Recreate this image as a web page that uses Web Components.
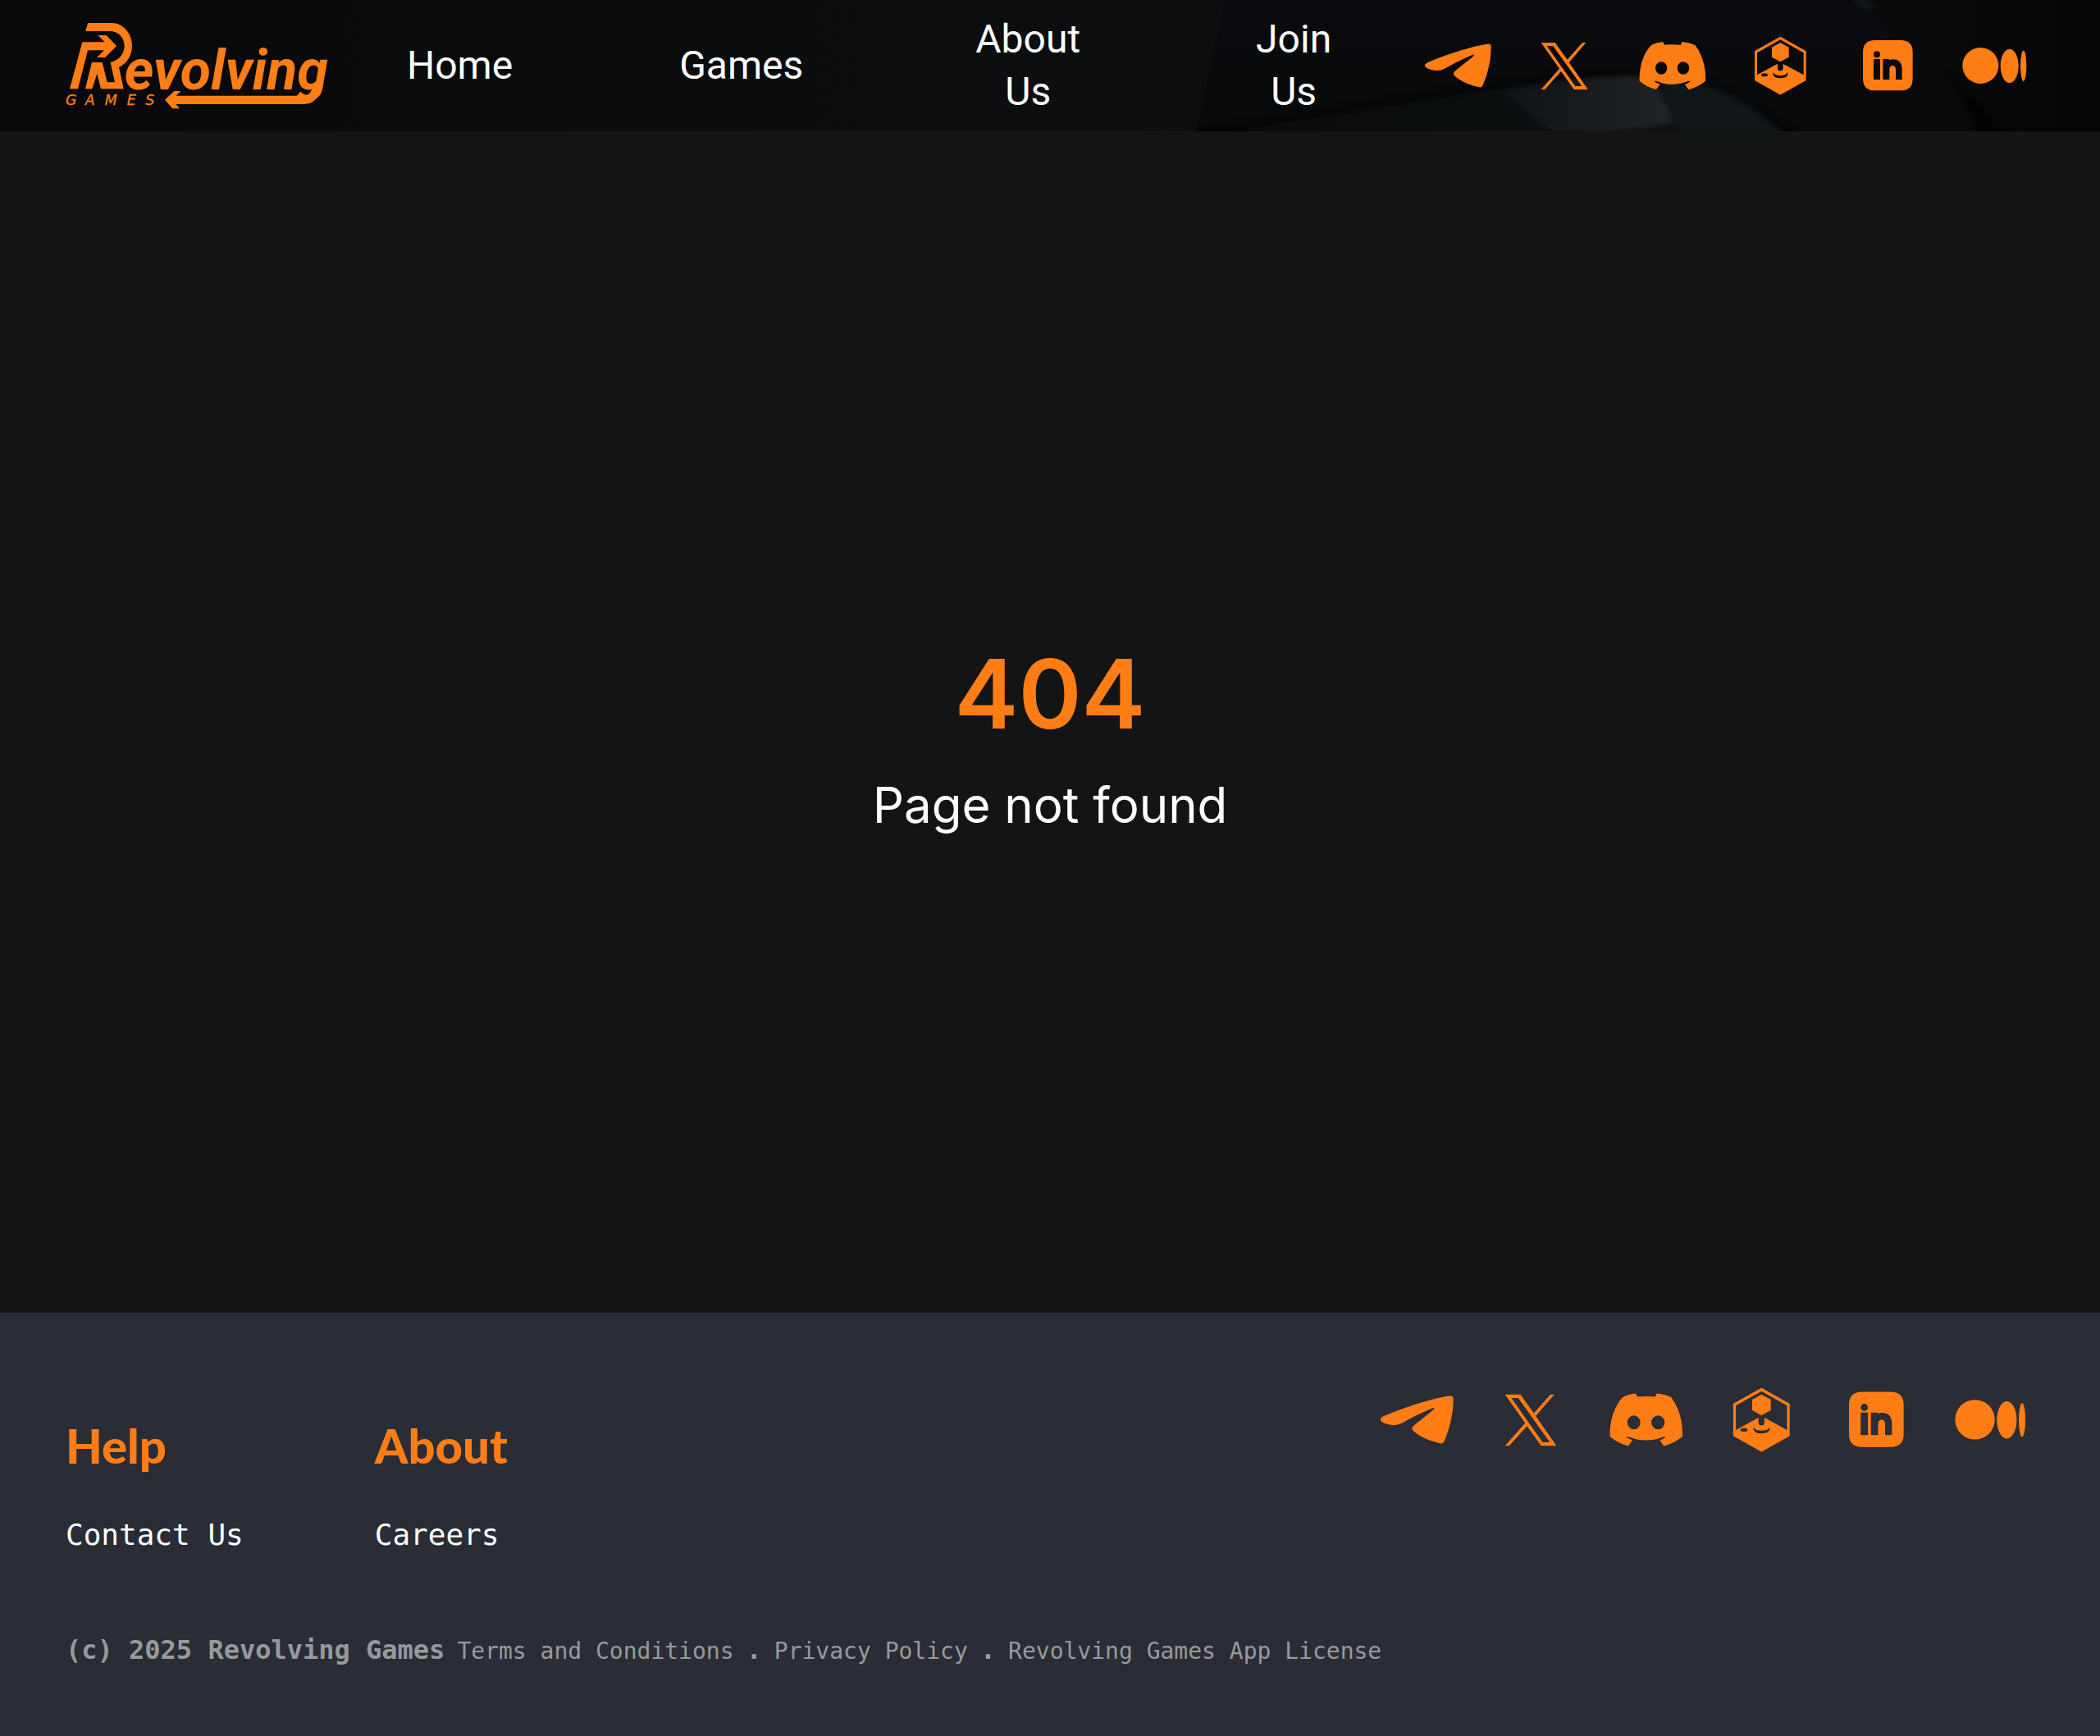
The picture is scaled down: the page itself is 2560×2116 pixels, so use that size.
<!DOCTYPE html>
<html lang="en">
<head>
<meta charset="utf-8">
<meta name="viewport" content="width=device-width, initial-scale=1">
<title>Revolving Games</title>
<style>
  :root { --accent: #ff7d14; --page: #131416; --panel: #2a2d35; --muted: #98999c; }
  body { margin: 0; background: var(--page); color: #fff; font-family: Inter, sans-serif; }
</style>
</head>
<body>
<site-page>
  <site-header slot="header"></site-header>
  <error-message code="404">Page not found</error-message>
  <site-footer slot="footer">
    <footer-column heading="Help"><a href="#contact">Contact Us</a></footer-column>
    <footer-column heading="About"><a href="#careers">Careers</a></footer-column>
  </site-footer>
</site-page>

<script>
const define = (name, html, setup) => {
  const template = document.createElement('template');
  template.innerHTML = html;
  customElements.define(name, class extends HTMLElement {
    constructor() {
      super();
      this.attachShadow({ mode: 'open' }).append(template.content.cloneNode(true));
    }
    connectedCallback() { if (setup) setup(this, this.shadowRoot); }
  });
};

define('brand-logo', `
  <style>
    :host { display: block; flex: none; }
    a { display: block; color: var(--accent); }
    svg { display: block; width: 321px; height: 104px; fill: currentColor; overflow: visible; }
    .word { font: italic 700 204px "Roboto", sans-serif; }
    .sub { font: italic 400 52px "DejaVu Sans", sans-serif; stroke: currentColor; stroke-width: 1; }
  </style>
  <a href="#home" aria-label="Revolving Games">
    <svg viewBox="60 53 963 312">
      <path d="M121 123H203L178 98H209L246 137L205 179H174L201 153H141L105 294H75Z"/>
      <path d="M141 53H228C272 53 303 92 303 137C303 172 283 202 255 215L272 294H189L175 238L157 294H132L156 197H194L212 270H240L224 197C255 190 275 166 275 137C275 106 252 83 220 83H133Z"/>
      <path d="M464 319H930C948 319 958 308 963 288H993C985 330 965 350 930 350H463L477 366H451L423 334L457 302H482Z"/>
      <text class="word" x="275" y="295">evolving</text>
      <text class="sub" x="60 131 203 284 352" y="353">GAMES</text>
    </svg>
  </a>`);

define('social-links', `
  <style>
    :host { display: flex; gap: var(--icon-gap, 50px); flex: none; }
    a { display: block; color: var(--accent); }
    svg { display: block; width: var(--icon-width, 81px); height: var(--icon-height, 71px); fill: currentColor; fill-rule: evenodd; }
  </style>
  <a href="#telegram" aria-label="Telegram"><svg viewBox="111 132 243 213"><path d="M111 237C110 232 116 228 122 225C190 196 290 164 340 158C350 157 354 162 353 170C353 215 342 265 323 308C320 316 315 318 306 315C275 308 245 295 225 279C214 270 213 264 222 256L288 203C293 198 290 196 283 199C250 212 215 230 185 247C170 255 160 256 145 254C125 250 112 246 111 237Z"/></svg></a>
  <a href="#x" aria-label="X"><svg viewBox="504 132 243 213"><path d="M536 153H587L632 215L687 153H700L638 225L707 324H656L609 258L550 324H536L603 248ZM557 165L661 312H685L580 165Z"/></svg></a>
  <a href="#discord" aria-label="Discord"><svg viewBox="896 132 243 213" overflow="visible"><path d="M978 150C964 152 949 156 937 163C910 192 893 240 895 293C912 308 932 318 955 324Q957 324 958 322L970 305C962 302 955 300 949 294C953 293 957 294 961 295C995 309 1035 309 1069 295C1073 294 1077 293 1081 294C1076 300 1068 303 1061 306L1072 322Q1074 325 1077 324C1098 318 1118 308 1136 293C1139 240 1122 195 1099 163C1086 156 1068 152 1053 150Q1051 150 1050 151L1045 161C1026 159 1006 159 986 161L981 151Q980 150 978 150ZM953 246a21.5 23.5 0 1 0 43 0a21.5 23.5 0 1 0 -43 0ZM1033 246a22 23.5 0 1 0 44 0a22 23.5 0 1 0 -44 0Z"/></svg></a>
  <a href="#gamehub" aria-label="Game hub"><svg viewBox="61 132 243 213"><path d="M180 132H184L276 184V291L184 343H180L88 291V184ZM182 142L97 190V271L172 230V246Q172 256 182 256Q192 256 192 246V230L267 271V190ZM182 153L213 170V206L182 223L151 206V170ZM157 261C152 268 157 283 182 283C208 283 213 268 208 261C208 268 200 273 182 273C165 273 157 268 157 261ZM112 271a12 6 0 1 0 24 0a12 6 0 1 0 -24 0Z"/></svg></a>
  <a href="#linkedin" aria-label="LinkedIn"><svg viewBox="453 132 243 213"><path d="M527 144H621Q665 144 665 188V284Q665 328 621 328H527Q483 328 483 284V188Q483 144 527 144ZM522 196a12 12 0 1 0 24 0a12 12 0 1 0 -24 0ZM522 213H546V288H522ZM556 213H579V217C595 210 626 212 626 250V288H603V250C603 233 580 233 580 250V288H556Z"/></svg></a>
  <a href="#medium" aria-label="Medium"><svg viewBox="845 132 243 213"><circle cx="912" cy="237" r="66"/><ellipse cx="1018" cy="238" rx="33" ry="62"/><ellipse cx="1069" cy="238" rx="11" ry="56"/></svg></a>`);

define('site-header', `
  <style>
    :host { display: block; position: relative; background: #090a0c; overflow: hidden; }
    .backdrop { position: absolute; inset: 0; width: 100%; height: 100%; }
    .bar { position: relative; display: flex; align-items: center; min-height: 160px; padding: 0 87px 0 80px; box-sizing: border-box; }
    nav { display: flex; align-items: center; margin-right: auto; }
    nav a { padding: 0 108px 0 95px; color: #fff; text-decoration: none; text-align: center; font: 400 48px/64px Roboto, sans-serif; }
    nav a.stacked { padding: 0 112px 0 102px; }
  </style>
  <svg class="backdrop" viewBox="0 0 2560 160" preserveAspectRatio="none" aria-hidden="true">
    <defs>
      <linearGradient id="base"><stop offset="0" stop-color="#08090b"/><stop offset=".56" stop-color="#0d0e10"/><stop offset=".6" stop-color="#0d0e10"/></linearGradient>
      <linearGradient id="panel" x2="0" y2="1"><stop offset="0" stop-color="#0b0c10"/><stop offset="1" stop-color="#070809"/></linearGradient>
      <linearGradient id="hull" gradientUnits="userSpaceOnUse" x1="1480" y1="0" x2="2040" y2="0"><stop offset="0" stop-color="#0a0b0c"/><stop offset=".62" stop-color="#0c0f10"/><stop offset="1" stop-color="#0f1214"/></linearGradient>
      <linearGradient id="shine" gradientUnits="userSpaceOnUse" x1="1840" y1="0" x2="2040" y2="0"><stop offset="0" stop-color="#101416"/><stop offset=".8" stop-color="#1d2124"/><stop offset="1" stop-color="#212528"/></linearGradient>
      <linearGradient id="night" gradientUnits="userSpaceOnUse" x1="2280" y1="0" x2="2540" y2="0"><stop offset="0" stop-color="#090a0b"/><stop offset="1" stop-color="#050505"/></linearGradient>
      <filter id="soft" color-interpolation-filters="sRGB"><feGaussianBlur stdDeviation="3"/></filter>
    </defs>
    <rect width="2560" height="160" fill="url(#base)"/>
    <path d="M1493 0H2560V160H1458Z" fill="url(#panel)"/>
    <path d="M2262 0Q2360 70 2415 160H2560V0Z" fill="url(#night)"/>
    <g filter="url(#soft)">
      <path d="M1458 164Q1700 122 1850 101T2060 94Q2130 120 2184 164Z" fill="url(#hull)" stroke="#040405" stroke-width="7"/>
      <path d="M1835 112Q1920 92 2000 92Q2022 102 2040 149L1960 164H1895Z" fill="url(#shine)"/>
      <path d="M2022 93Q2115 100 2174 164H2050Z" fill="#111618"/>
      <path d="M2262 -2L2282 10" stroke="#15191c" stroke-width="8"/>
      <path d="M2375 90Q2395 120 2412 166H2450Q2400 110 2375 90Z" fill="#030304"/>
    </g>
  </svg>
  <div class="bar">
    <brand-logo></brand-logo>
    <nav aria-label="Main">
      <a href="#home">Home</a>
      <a href="#games">Games</a>
      <a class="stacked" href="#about">About<br>Us</a>
      <a class="stacked" href="#join">Join<br>Us</a>
    </nav>
    <social-links></social-links>
  </div>`);

define('error-message', `
  <style>
    :host { display: flex; flex-direction: column; align-items: center; justify-content: center; gap: 29px; padding-top: 32px; text-align: center; }
    h1 { margin: 0; color: var(--accent); font: 600 117px/140px Inter, sans-serif; }
    p { margin: 0; font: 400 60px/72px Inter, sans-serif; }
  </style>
  <h1></h1>
  <p><slot></slot></p>`, (host, root) => {
  root.querySelector('h1').textContent = host.getAttribute('code');
});

define('footer-column', `
  <style>
    :host { display: flex; flex-direction: column; gap: 52px; }
    h2 { margin: 0; color: var(--accent); font: 900 58px/70px Lato, sans-serif; }
    ::slotted(a) { color: #fff; text-decoration: none; font: 400 36px/44px "DejaVu Sans Mono", monospace; }
  </style>
  <h2></h2>
  <slot></slot>`, (host, root) => {
  root.querySelector('h2').textContent = host.getAttribute('heading');
});

define('site-footer', `
  <style>
    :host { display: flex; flex-direction: column; gap: 98px; padding: 92px 88px 83px 80px; background: var(--panel); }
    .top { display: flex; justify-content: space-between; align-items: flex-start; }
    .columns { display: flex; gap: 160px; padding-top: 35px; }
    social-links { --icon-width: 89px; --icon-height: 78px; --icon-gap: 51px; }
    .legal { display: flex; flex-wrap: wrap; align-items: baseline; gap: 15px; color: var(--muted); font: 700 32px/40px "DejaVu Sans Mono", monospace; }
    .legal a { color: inherit; text-decoration: none; font-size: 28px; font-weight: 400; }
  </style>
  <div class="top">
    <div class="columns"><slot></slot></div>
    <social-links></social-links>
  </div>
  <div class="legal">
    <span>(c) 2025 Revolving Games</span>
    <a href="#terms">Terms and Conditions</a><span>.</span>
    <a href="#privacy">Privacy Policy</a><span>.</span>
    <a href="#license">Revolving Games App License</a>
  </div>`);

define('site-page', `
  <style>
    :host { display: flex; flex-direction: column; min-height: 100vh; }
    main { flex: 1; display: grid; }
  </style>
  <slot name="header"></slot>
  <main><slot></slot></main>
  <slot name="footer"></slot>`);
</script>
</body>
</html>
